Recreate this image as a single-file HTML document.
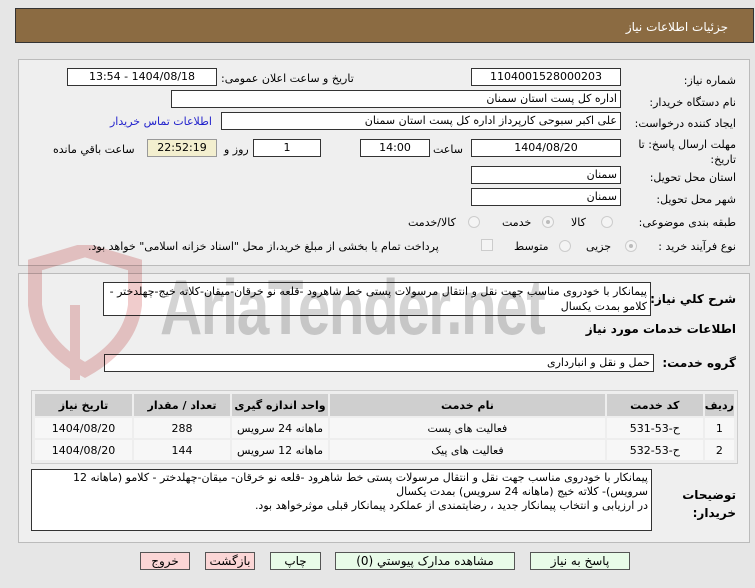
<!DOCTYPE html>
<html><head><meta charset="utf-8"><style>
body{margin:0;width:755px;height:588px;background:#e6e6e6;font-family:"DejaVu Sans","Liberation Sans",sans-serif;font-size:11px;color:#000;position:relative;overflow:hidden;direction:rtl}
.a{position:absolute;white-space:nowrap}
.b{position:absolute;background:#fff;border:1px solid #333;box-sizing:border-box;height:18px;line-height:16px;padding:0 3px}
.c{text-align:center}
.p{position:absolute;border:1px solid #bbb;background:#efefef;box-sizing:border-box}
.r{position:absolute;width:12px;height:12px;border-radius:50%;border:1px solid #ccc;background:#f4f4f4;box-sizing:border-box}
.btn{position:absolute;top:552px;height:18px;border:1px solid #555;box-sizing:border-box;text-align:center;line-height:16px;font-size:12px}
table{position:absolute;left:33px;top:392px;width:703px;border-collapse:separate;border-spacing:2px;direction:rtl}
td,th{text-align:center;height:20px;padding:0}
th{background:#cfcfcf;font-weight:bold;height:22px}
td{background:#f7f7f7}
.wm{mix-blend-mode:multiply;z-index:5}
</style></head><body>
<div class="a" style="left:15px;top:8px;width:739px;height:35px;background:#8b6b42;border:1px solid #333;box-sizing:border-box"></div>
<div class="a" style="right:27px;top:20px;color:#fff;font-size:12px">جزئیات اطلاعات نیاز</div>

<div class="p" style="left:18px;top:59px;width:732px;height:207px"></div>
<div class="a" style="right:19px;top:74px">شماره نیاز:</div>
<div class="b c" style="left:471px;top:68px;width:150px">1104001528000203</div>
<div class="a" style="left:221px;top:72px">تاریخ و ساعت اعلان عمومی:</div>
<div class="b c" style="left:67px;top:68px;width:150px">1404/08/18 - 13:54</div>
<div class="a" style="right:19px;top:96px">نام دستگاه خریدار:</div>
<div class="b" style="left:171px;top:90px;width:450px">اداره کل پست استان سمنان</div>
<div class="a" style="right:19px;top:117px">ایجاد کننده درخواست:</div>
<div class="b" style="left:221px;top:112px;width:400px">علی اکبر سبوحی کارپرداز اداره کل پست استان سمنان</div>
<div class="a" style="left:110px;top:115px;color:#22c">اطلاعات تماس خریدار</div>
<div class="a" style="right:19px;top:137px;line-height:15px;white-space:normal;width:110px">مهلت ارسال پاسخ: تا تاریخ:</div>
<div class="b c" style="left:471px;top:139px;width:150px">1404/08/20</div>
<div class="a" style="left:433px;top:143px">ساعت</div>
<div class="b c" style="left:360px;top:139px;width:70px">14:00</div>
<div class="b c" style="left:253px;top:139px;width:68px">1</div>
<div class="a" style="left:224px;top:143px">روز و</div>
<div class="b c" style="left:147px;top:139px;width:70px;background:#f3efcf;border-color:#999">22:52:19</div>
<div class="a" style="left:53px;top:143px">ساعت باقي مانده</div>
<div class="a" style="right:19px;top:171px">استان محل تحویل:</div>
<div class="b" style="left:471px;top:166px;width:150px">سمنان</div>
<div class="a" style="right:19px;top:193px">شهر محل تحویل:</div>
<div class="b" style="left:471px;top:188px;width:150px">سمنان</div>
<div class="a" style="right:19px;top:216px">طبقه بندی موضوعی:</div>
<div class="r" style="left:601px;top:216px"></div><div class="a" style="left:571px;top:216px">کالا</div>
<div class="r" style="left:542px;top:216px"><div style="width:4px;height:4px;border-radius:50%;background:#bbb;margin:3px"></div></div><div class="a" style="left:502px;top:216px">خدمت</div>
<div class="r" style="left:468px;top:216px"></div><div class="a" style="left:408px;top:216px">کالا/خدمت</div>
<div class="a" style="right:19px;top:240px">نوع فرآیند خرید :</div>
<div class="r" style="left:625px;top:240px"><div style="width:4px;height:4px;border-radius:50%;background:#bbb;margin:3px"></div></div><div class="a" style="left:586px;top:240px">جزیی</div>
<div class="r" style="left:559px;top:240px"></div><div class="a" style="left:514px;top:240px">متوسط</div>
<div class="a" style="left:481px;top:239px;width:12px;height:12px;border:1px solid #ccc;background:#f4f4f4;box-sizing:border-box"></div>
<div class="a" style="left:88px;top:240px">پرداخت تمام یا بخشی از مبلغ خرید،از محل "اسناد خزانه اسلامی" خواهد بود.</div>

<div class="p" style="left:18px;top:273px;width:732px;height:270px"></div>
<div class="a" style="right:19px;top:292px;font-weight:bold;font-size:12px">شرح کلي نیاز:</div>
<div class="b" style="left:103px;top:282px;width:548px;height:34px;line-height:15px;white-space:normal;padding-top:1px">پیمانکار با خودروی مناسب جهت نقل و انتقال مرسولات پستی خط شاهرود -قلعه نو خرقان-میقان-کلاته خیج-چهلدختر - کلامو بمدت یکسال</div>
<div class="a" style="right:19px;top:322px;font-weight:bold;font-size:12px">اطلاعات خدمات مورد نیاز</div>
<div class="a" style="right:19px;top:356px;font-weight:bold;font-size:12px">گروه خدمت:</div>
<div class="b" style="left:104px;top:354px;width:550px">حمل و نقل و انبارداری</div>
<div class="a" style="left:31px;top:390px;width:707px;height:74px;border:1px solid #ccc;box-sizing:border-box;background:#eee"></div>
<table>
<tr><th style="width:26px">ردیف</th><th style="width:96px">کد خدمت</th><th>نام خدمت</th><th style="width:96px">واحد اندازه گیری</th><th style="width:96px">تعداد / مقدار</th><th style="width:97px">تاریخ نیاز</th></tr>
<tr><td>1</td><td>ح-53-531</td><td>فعالیت های پست</td><td>ماهانه 24 سرویس</td><td>288</td><td>1404/08/20</td></tr>
<tr><td>2</td><td>ح-53-532</td><td>فعالیت های پیک</td><td>ماهانه 12 سرویس</td><td>144</td><td>1404/08/20</td></tr>
</table>
<div class="a" style="right:19px;top:486px;font-weight:bold;font-size:12px;line-height:18px;white-space:normal;width:60px">توضیحات خریدار:</div>
<div class="b" style="left:31px;top:469px;width:621px;height:62px;line-height:14px;white-space:normal;padding-top:1px">پیمانکار با خودروی مناسب جهت نقل و انتقال مرسولات پستی خط شاهرود -قلعه نو خرقان- میقان-چهلدختر - کلامو (ماهانه 12 سرویس)- کلاته خیج (ماهانه 24 سرویس) بمدت یکسال<br>در ارزیابی و انتخاب پیمانکار جدید ، رضایتمندی از عملکرد پیمانکار قبلی موثرخواهد بود.</div>

<svg class="a wm" style="left:20px;top:245px" width="130" height="140" viewBox="0 0 130 140"><path d="M15 20 L65 5 L115 20 L115 60 Q110 100 65 125 Q20 100 15 60 Z" fill="none" stroke="#f0cccc" stroke-width="14"/><path d="M55 60 L55 135" stroke="#f0cccc" stroke-width="10"/></svg>
<div class="a wm" style="left:160px;top:262px;font-family:'Liberation Sans',sans-serif;font-size:78px;font-weight:bold;color:#d4d4d4;direction:ltr;transform:scaleX(0.75);transform-origin:left top;letter-spacing:-2px">AriaTender.net</div>

<div class="btn" style="left:530px;width:100px;background:#e8fbe8">پاسخ به نیاز</div>
<div class="btn" style="left:335px;width:180px;background:#e8fbe8">مشاهده مدارک پیوستي (0)</div>
<div class="btn" style="left:270px;width:51px;background:#e8fbe8">چاپ</div>
<div class="btn" style="left:205px;width:50px;background:#fbd6d6">بازگشت</div>
<div class="btn" style="left:140px;width:50px;background:#fbd6d6">خروج</div>
</body></html>
